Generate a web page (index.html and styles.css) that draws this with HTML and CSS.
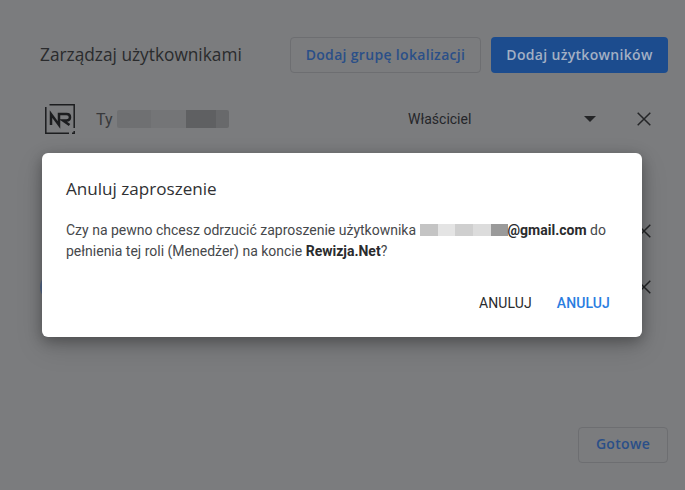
FILE: index.html
```html
<!DOCTYPE html>
<html lang="pl">
<head>
<meta charset="utf-8">
<title>Zarządzaj użytkownikami</title>
<link rel="stylesheet" href="styles.css">
</head>
<body>
<main class="page">
  <header class="head">
    <h1 class="title">Zarządzaj użytkownikami</h1>
    <div class="actions">
      <button class="btn btn-outline">Dodaj grupę lokalizacji</button>
      <button class="btn btn-fill">Dodaj użytkowników</button>
    </div>
  </header>
  <div class="row row-first">
    <svg class="logo" viewBox="0 0 30 30" width="30" height="30" fill="none" stroke="#1c1d1f">
      <path d="M4.500 .8H29.200V24M.8 3V29.200H24M27 29.200H29.200V27" stroke-width="1.500"/>
      <path d="M6 21V10L14 21V10H21.500Q25 10 25 13.200T21.500 16.500H18L24.500 21" stroke-width="2.500"/>
    </svg>
    <div class="who">Ty <span class="blur-name"></span></div>
    <div class="role">Właściciel</div>
    <span class="caret"></span>
    <svg class="x" viewBox="0 0 14 14" width="14" height="14"><path d="M.7 .7L13.300 13.300M13.300 .7L.7 13.300"/></svg>
  </div>
  <div class="row row-second">
    <span class="chip"></span>
    <svg class="x" viewBox="0 0 14 14" width="14" height="14"><path d="M.7 .7L13.300 13.300M13.300 .7L.7 13.300"/></svg>
  </div>
  <div class="row row-third">
    <span class="chip chip-blue"></span>
    <svg class="x" viewBox="0 0 14 14" width="14" height="14"><path d="M.7 .7L13.300 13.300M13.300 .7L.7 13.300"/></svg>
  </div>
  <footer class="foot"><button class="btn btn-outline btn-done">Gotowe</button></footer>
</main>
<section class="dialog">
  <h2 class="dialog-title">Anuluj zaproszenie</h2>
  <p class="dialog-text">Czy na pewno chcesz odrzucić zaproszenie użytkownika <span class="blur-mail"><i class="b1"></i><i class="b2"></i><i class="b3"></i><i class="b4"></i><i class="b5"></i></span><b>@gmail.com</b> do pełnienia tej roli (Menedżer) na koncie <b>Rewizja.Net</b>?</p>
  <div class="dialog-actions">
    <button class="text-btn">ANULUJ</button>
    <button class="text-btn text-btn-blue">ANULUJ</button>
  </div>
</section>
</body>
</html>
```
FILE: styles.css
```css
* { box-sizing: border-box; }
html, body { margin: 0; height: 100%; }
body { background: #7b7c7e; font-family: Roboto, "Liberation Sans", sans-serif; color: #2c2d2f; overflow: hidden; }
.page { height: 490px; padding: 37px 17px 27px 40px; display: flex; flex-direction: column; }
.head { display: flex; align-items: center; justify-content: space-between; height: 36px; }
.title { margin: 0 0 1px; font: 400 17.3px/24px "Open Sans", sans-serif; color: #2a2b2d; }
.actions { display: flex; gap: 10px; }
.btn { height: 36px; border-radius: 4px; font: 600 14px/20px "Open Sans", sans-serif; letter-spacing: .32px; padding: 0 0 1px; }
.btn-outline { width: 191px; background: transparent; color: #2a4f88; border: 1px solid #6d6e71; }
.btn-fill { width: 177px; background: #1c4c8e; color: #a3b0c4; border: 0; }
.row { display: flex; align-items: center; padding-right: 17px; }
.row-first { height: 30px; margin-top: 31px; padding-left: 5px; }
.row-second { height: 32px; margin-top: 81px; }
.row-third { height: 32px; margin-top: 24px; }
.logo { flex: none; }
.who { margin-left: 21px; width: 312px; font-size: 16px; color: #38393b; display: flex; align-items: center; gap: 4px; }
.blur-name { display: block; width: 112px; height: 18px; background: linear-gradient(90deg, #6f7072 0 30%, #747577 30% 62%, #5f6062 62% 88%, #68696b 88% 100%); border-radius: 2px; filter: blur(.5px); }
.role { width: 176px; font-size: 14px; color: #25262a; }
.caret { width: 0; height: 0; border: 6px solid transparent; border-top-color: #242527; border-bottom: 0; margin-right: 41px; }
.x { flex: none; margin-left: auto; stroke: #242527; stroke-width: 1.500; fill: none; }
.row-first .x { margin-left: 0; }
.chip { width: 30px; height: 30px; }
.chip-blue { background: #566a8c; border-radius: 50%; }
.foot { margin-top: auto; display: flex; justify-content: flex-end; }
.btn-done { width: 90px; padding-bottom: 3px; }
.dialog { position: absolute; left: 42px; top: 153px; width: 600px; height: 184px; background: #fff; border-radius: 6px; padding: 26px 24px 0; box-shadow: 0 4px 14px rgba(0,0,0,.3), 0 10px 28px rgba(0,0,0,.14); display: flex; flex-direction: column; }
.dialog-title { margin: 0; font: 400 17.100px/20px "Open Sans", sans-serif; color: #303134; }
.dialog-text { margin: 21px 0 0; font-size: 14px; line-height: 21px; color: #46484b; }
.dialog-text b { font-weight: 700; color: #2a2b2d; }
.blur-mail { display: inline-flex; height: 12px; vertical-align: -1px; }
.blur-mail i { display: block; height: 12px; }
.b1 { width: 18px; background: #c4c4c4; }
.b2 { width: 17px; background: #e4e4e4; }
.b3 { width: 18px; background: #cfcfcf; }
.b4 { width: 18px; background: #dcdcdc; }
.b5 { width: 17px; background: #9a9a9a; }
.dialog-actions { margin-top: auto; margin-bottom: 24px; display: flex; justify-content: flex-end; gap: 25px; padding-right: 8px; }
.text-btn { background: none; border: 0; padding: 0; font: 400 14px/20px Roboto, sans-serif; letter-spacing: .1px; color: #2a2b2d; }
.text-btn-blue { color: #2a7de1; font-weight: 500; }
```
